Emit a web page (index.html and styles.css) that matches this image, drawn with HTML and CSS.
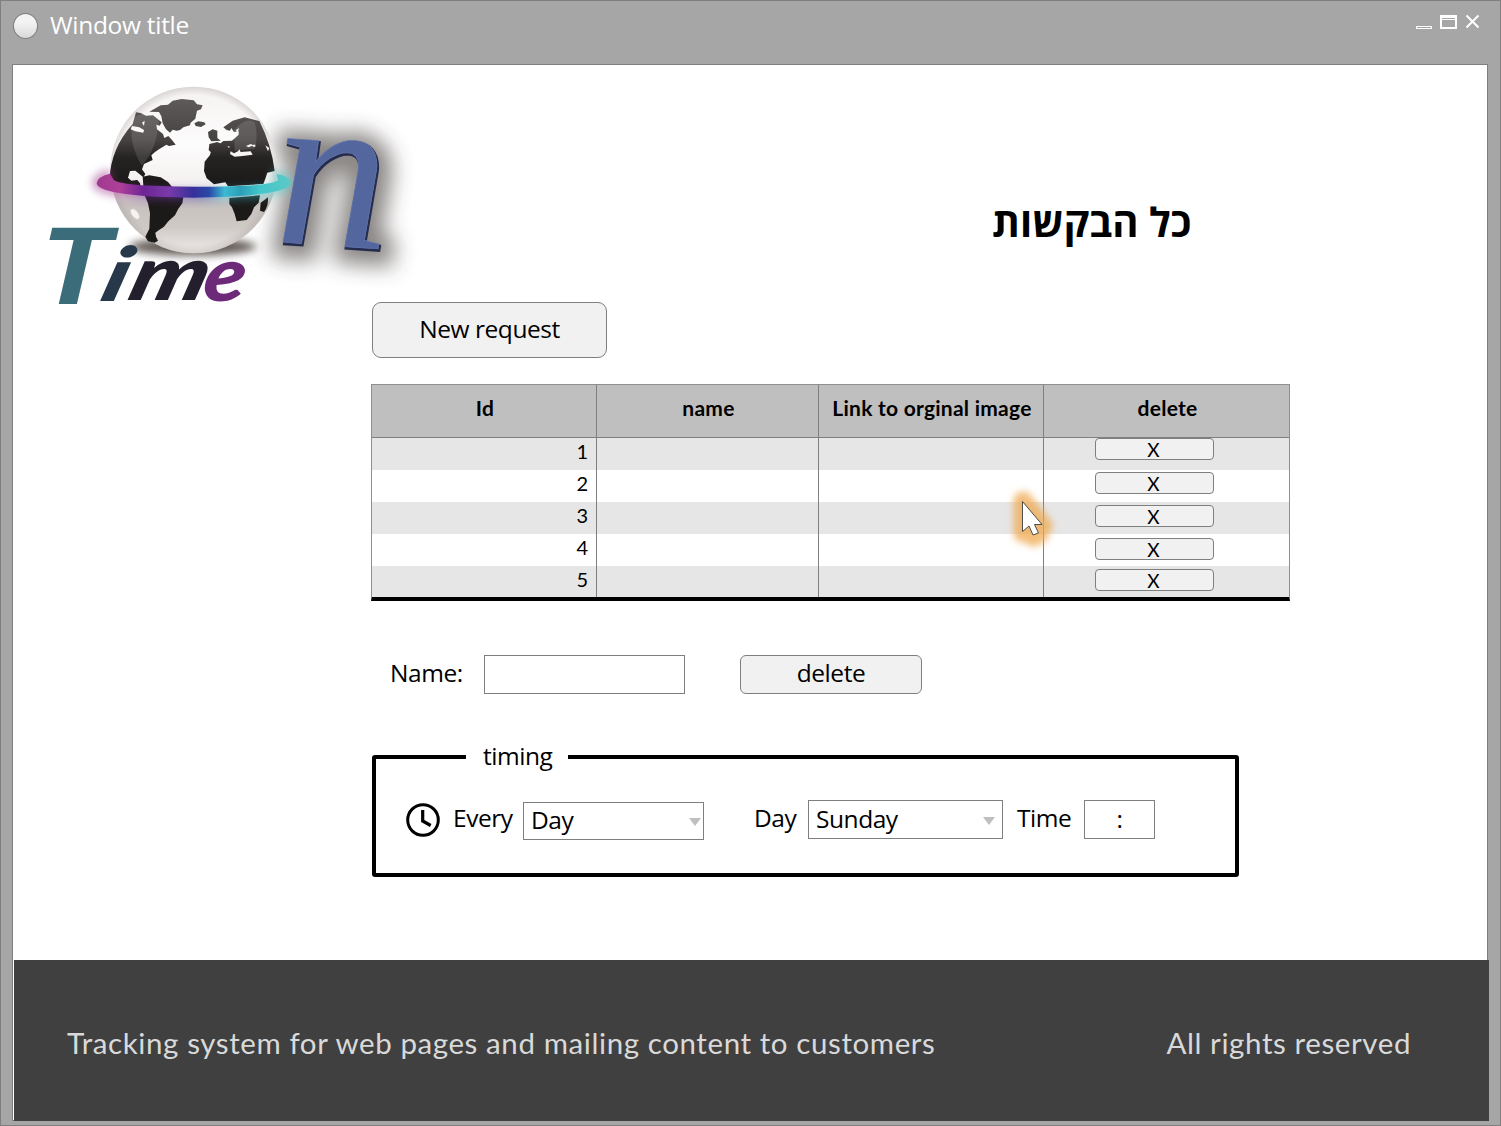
FILE: index.html
```html
<!DOCTYPE html>
<html lang="en">
<head>
<meta charset="utf-8">
<title>Window title</title>
<link rel="stylesheet" href="styles.css">
</head>
<body>
<div class="window">
  <header class="titlebar">
    <span class="orb"></span>
    <span class="window-title">Window title</span>
    <svg class="controls" width="66" height="18" viewBox="0 0 66 18">
      <rect x="1.500" y="12.500" width="15" height="2" fill="#a6a6a6" stroke="#fff"/>
      <path fill="#fff" fill-rule="evenodd" d="M25 1h17v14H25zM27 4v1h13V4zM27 6v7h13V6z"/>
      <path d="M51.500 1.500l12 12M63.500 1.500l-12 12" stroke="#fff" stroke-width="2" fill="none"/>
    </svg>
  </header>
  <main class="panel">
    <div class="banner">
      <svg class="logo" width="390" height="250" viewBox="0 0 1170 750">
        <defs>
          <filter id="soft" x="-50%" y="-60%" width="200%" height="220%"><feGaussianBlur stdDeviation="12"/></filter>
          <filter id="wide" x="-60%" y="-60%" width="220%" height="220%"><feGaussianBlur stdDeviation="32"/></filter>
          <filter id="tiny" x="-50%" y="-50%" width="200%" height="200%"><feGaussianBlur stdDeviation="2"/></filter>
          <linearGradient id="ball" x1="0" y1="0" x2="0" y2="1">
            <stop offset="0" stop-color="#f4f2f1"/><stop offset=".35" stop-color="#fdfcfc"/>
            <stop offset=".6" stop-color="#f2efee"/><stop offset=".7" stop-color="#c6c0be"/>
            <stop offset=".84" stop-color="#cfc9c6"/><stop offset="1" stop-color="#eeebe9"/>
          </linearGradient>
          <radialGradient id="rim"><stop offset=".9" stop-color="#a79f9c" stop-opacity="0"/><stop offset="1" stop-color="#a79f9c" stop-opacity=".35"/></radialGradient>
          <linearGradient id="land" x1="0" y1="80" x2="0" y2="340" gradientUnits="userSpaceOnUse">
            <stop offset="0" stop-color="#5f5c5b"/><stop offset=".5" stop-color="#454241"/><stop offset=".7" stop-color="#262423"/><stop offset="1" stop-color="#1c1a19"/>
          </linearGradient>
          <linearGradient id="ring" x1="200" y1="0" x2="782" y2="0" gradientUnits="userSpaceOnUse">
            <stop offset="0" stop-color="#9e3a8e"/><stop offset=".12" stop-color="#b0409a"/><stop offset=".24" stop-color="#6d2495"/>
            <stop offset=".37" stop-color="#7a3aaa"/><stop offset=".5" stop-color="#35309a"/><stop offset=".58" stop-color="#2a4aa8"/>
            <stop offset=".66" stop-color="#3bbbd2"/><stop offset=".74" stop-color="#2b9fb8"/><stop offset=".84" stop-color="#42c6cb"/><stop offset="1" stop-color="#5cc9c6"/>
          </linearGradient>
        </defs>
        <ellipse cx="488" cy="530" rx="190" ry="26" fill="#4d4541" opacity=".9" filter="url(#soft)"/>
        <g transform="translate(735 515) skewY(4)">
          <text class="logo-n" x="8" y="12" fill="#3b3633" stroke="#3b3633" stroke-width="76" opacity=".6" filter="url(#wide)">n</text>
        </g>
        <circle cx="491" cy="300" r="250" fill="url(#ball)"/>
        <circle cx="491" cy="300" r="250" fill="url(#rim)"/>
        <g fill="url(#land)">
          <path d="M358 125l34-19 22-2 14-12 27-5 36 4 10 12 17 3-5 12-12 4-5 24-14 12-2 8-20 6-10 8-10 2-12-3-8 9-12-10-10-18-4-21-7-13z"/>
          <path d="M493 160l12-6 18 3 4 6-14 8-16-3z"/>
          <path fill-rule="evenodd" d="M318 127l14 2 16 8 21-1 26 21-6 10-10-3 2 14 18 14 4 12 12-6 11 12 11 14-20 4-8-4-22 14-12 8-11 10 4 14-26 12-6 16 10 14-6 10-12-10-12-10-16 1-6 20 10 9 18-2 8 10 2 12 24 2 18 12-28 1-22-6-20 8-30-16-28-18-7-6q2-92 69-167zM302 178l14 6 24 4 2-8-14-8-22-4zM336 158l6 10 2-16z"/>
          <path d="M338 320l20-4 34 6 22 14 12 14 28 22 6 10-3 18-12 16-10 20-20 18-13 16-15 10-11 8 2 12 6 12-10 6-20-4-8-14 12-24 2-46-6-30-12-28z"/>
          <path d="M580 172l28-20 36-10 44 11q36 70 46 150l-22 5-6 18-6 16-106 7-8-12-34 6-22-18-8-22 2-28 16-20 4-14 24-6 0-12 12-10 26-1 20-18 0-10-14 2-8-12-4 8-10-2z"/>
          <path d="M534 186l14-8 14 4 0 22 10 8-28 2-8-12z"/>
          <path d="M538 222l24-6 18 8-2 12-16 10-18 2-8-8z"/>
          <path d="M598 384l92-8-4 22-14 14-8 20-14 18-30 4-6-22-8-20-8-10z"/>
          <path d="M692 398l22-16q2 26-12 44l-12-4z"/>
        </g>
        <path d="M602 244l10 6 12-6 4-6 4 8 30-2 6 10-30 4-24 2-14-8zM648 228l14-6 8 4-14 6zM618 180l10-6-6 16zM668 224l8 0 0 6-8 0zM706 226l8 18 4-10zM592 230l6-2 0 6z" fill="#f6f3f2"/>
        <path d="M305 150q30-35 82-8-4 96-52 145-38-60-30-137zM612 180q36-40 62-24 12 42 0 80l-60 6z" fill="#fff" opacity=".12"/>
        <ellipse cx="315" cy="432" rx="9" ry="18" transform="rotate(-38 315 432)" fill="#fff" opacity=".8" filter="url(#tiny)"/>
        <path d="M244 312q-42 10-42 28c0 24 130 34 288 34s286-10 286-34q-2-18-48-26" fill="none" stroke="url(#ring)" stroke-width="30" opacity=".55" filter="url(#soft)"/>
        <path d="M240 311q-40 10-40 29c0 28 132 43 290 43s292-16 292-43q0-20-42-28l4 18q-14 20-248 20t-246-22z" fill="url(#ring)"/>
        <g transform="translate(735 515) skewY(4)">
          <text class="logo-n" x="3" y="5" fill="#252c4d" stroke="#252c4d" stroke-width="7">n</text>
          <text class="logo-n" x="0" y="0" fill="#53669d" stroke="#6779b0" stroke-width="2">n</text>
        </g>
        <text class="logo-word logo-cap" transform="translate(22 703) skewX(-5)" textLength="212" lengthAdjust="spacingAndGlyphs" fill="#3b6c79">T</text>
        <g class="logo-word">
          <text transform="translate(204 692) skewX(-16)" textLength="76" lengthAdjust="spacingAndGlyphs" fill="#27384a">i</text>
          <text transform="translate(288 690) skewX(-16)" textLength="232" lengthAdjust="spacingAndGlyphs" fill="#231f2d">m</text>
          <text transform="translate(514 692) skewX(-8)" textLength="126" lengthAdjust="spacingAndGlyphs" fill="#6c2a79">e</text>
        </g>
      </svg>
      <h1 class="heading" dir="rtl" lang="he">כל הבקשות</h1>
    </div>
    <section class="content">
      <button class="btn btn-new">New request</button>
      <div class="table">
        <div class="row head"><span>Id</span><span>name</span><span>Link to orginal image</span><span>delete</span></div>
        <div class="row"><span class="id">1</span><span></span><span></span><span><button class="btn btn-x">X</button></span></div>
        <div class="row"><span class="id">2</span><span></span><span></span><span><button class="btn btn-x">X</button></span></div>
        <div class="row"><span class="id">3</span><span></span><span></span><span><button class="btn btn-x">X</button></span></div>
        <div class="row"><span class="id">4</span><span></span><span></span><span><button class="btn btn-x">X</button></span></div>
        <div class="row"><span class="id">5</span><span></span><span></span><span><button class="btn btn-x">X</button></span></div>
      </div>
      <div class="name-row">
        <label class="name-label">Name:</label>
        <span class="field name-field"></span>
        <button class="btn btn-delete">delete</button>
      </div>
      <fieldset class="timing">
        <legend>timing</legend>
        <div class="timing-row">
          <svg class="clock" width="34" height="34" viewBox="0 0 34 34" fill="none" stroke="#000"><circle cx="17" cy="17" r="15.300" stroke-width="3"/><path d="M16.700 7v11l8 4.500" stroke-width="3.200"/></svg>
          <span class="lbl every">Every</span>
          <span class="field select sel-day">Day<i class="arrow"></i></span>
          <span class="lbl day">Day</span>
          <span class="field select sel-sunday">Sunday<i class="arrow"></i></span>
          <span class="lbl time">Time</span>
          <span class="field clock-field">:</span>
        </div>
      </fieldset>
    </section>
    <footer class="footer"><span>Tracking system for web pages and mailing content to customers</span><span>All rights reserved</span></footer>
    <svg class="cursor" width="60" height="70" viewBox="0 0 60 70">
      <defs><filter id="glow" x="-100%" y="-100%" width="300%" height="300%"><feGaussianBlur stdDeviation="3.500"/></filter></defs>
      <path d="M23 15v32l6-5 4 9 6-3-1-8h5z" fill="#efa94f" stroke="#efa94f" stroke-width="19" stroke-linejoin="round" opacity=".75" filter="url(#glow)"/>
      <path d="M22.500 15.500v30l6.500-5.500 4 9 5.500-2-4-8.500h7.500z" fill="#fff" stroke="#4d4d4d"/>
    </svg>
  </main>
</div>
</body>
</html>
```
FILE: styles.css
```css
* { box-sizing: border-box; }
body {
  margin: 0;
  font: 24.5px/32px "Open Sans", "Noto Sans", sans-serif;
  letter-spacing: -0.45px;
  color: #000;
}
.window {
  width: 1501px;
  height: 1126px;
  background: #a6a6a6;
  border: 1px solid #7f7f7f;
  padding: 0 12px 4px 11px;
  display: flex;
  flex-direction: column;
}
.titlebar {
  height: 63px;
  display: flex;
  align-items: flex-start;
  color: #fff;
}
.orb {
  width: 25px;
  height: 26px;
  margin: 12px 12px 0 1px;
  border: 1px solid #7f7f7f;
  border-radius: 50%;
  background: linear-gradient(#f3f3f3 35%, #d9d9d9);
}
.window-title { margin-top: 8px; letter-spacing: -0.3px; }
.controls { margin: 13px 7px 0 auto; }
.panel {
  flex: 1;
  position: relative;
  background: #fff;
  border: 1px solid #7f7f7f;
  display: flex;
  flex-direction: column;
}
.banner {
  height: 237px;
  padding-left: 17px;
  display: flex;
  align-items: flex-start;
}
.logo { margin-top: 5px; flex: none; overflow: visible; letter-spacing: 0; }
.logo-n { font: italic 680px "Liberation Serif", serif; }
.logo-word { font: italic 900 225px Lato, sans-serif; }
.logo-cap { font-size: 315px; }
.heading {
  margin: 133px 0 0 572px;
  font: bold 40px/48px "Open Sans", "Noto Sans", sans-serif;
  letter-spacing: 0;
  white-space: nowrap;
}
.content { padding-left: 358px; flex: 1; }
.btn {
  display: block;
  padding: 0;
  background: #f1f1f1;
  border: 1px solid #7f7f7f;
  color: #000;
  font: inherit;
  letter-spacing: inherit;
  text-align: center;
}
.btn-new { width: 235px; height: 56px; margin-left: 1px; padding-bottom: 2px; border-radius: 9px; }
.table {
  width: 919px;
  height: 217px;
  margin-top: 26px;
  border: 1px solid #8f8f8f;
  border-bottom: 4px solid #000;
  font: 20px/26px Lato, "Open Sans", sans-serif;
  letter-spacing: 0;
}
.row {
  display: grid;
  grid-template-columns: 225px 222px 225px 1fr;
  height: 32px;
}
.row > span { border-right: 1px solid #7f7f7f; }
.row > span:last-child { border-right: 0; }
.row:nth-child(even) { background: #e6e6e6; }
.row:last-child { height: 31px; }
.head {
  height: 53px;
  background: #bfbfbf;
  border-bottom: 1px solid #7f7f7f;
  text-align: center;
  font-size: 21px;
  font-weight: bold;
  letter-spacing: 0.25px;
  line-height: 46px;
}
.head > span { padding-left: 2px; }
.id { text-align: right; padding-right: 8px; }
.btn-x {
  width: 119px;
  height: 22px;
  margin: 0 0 0 51px;
  padding-right: 2px;
  border-radius: 4px;
  font-size: 19px;
  line-height: 22px;
}
.row:nth-child(3) .btn-x { margin-top: 2px; }
.row:nth-child(4) .btn-x, .row:nth-child(6) .btn-x { margin-top: 3px; }
.row:nth-child(5) .btn-x { margin-top: 4px; }
.name-row {
  margin-top: 54px;
  display: flex;
  height: 39px;
}
.name-label { width: 94px; margin-left: 19px; padding-top: 2px; }
.field { border: 1px solid #7f7f7f; background: #fff; display: block; }
.name-field { width: 201px; }
.btn-delete { width: 182px; margin-left: 55px; padding-bottom: 3px; border-radius: 6px; }
.timing {
  width: 867px;
  height: 135px;
  margin: 48px 0 0 1px;
  padding: 0;
  border: 4px solid #000;
  border-radius: 3px;
}
.timing legend { margin-left: 90px; width: 102px; height: 30px; padding: 0 0 0 17px; line-height: 28px; }
.timing-row { display: flex; margin-top: 28px; align-items: flex-start; }
.clock { margin: 3px 0 0 30px; flex: none; }
.lbl { padding-top: 2px; }
.every { margin-left: 13px; width: 70px; }
.select { display: flex; align-items: center; justify-content: space-between; padding: 0 2px 2px 7px; }
.arrow { border: 6.5px solid transparent; border-top: 8px solid #bfbfbf; border-bottom: 0; margin-top: 4px; }
.sel-day { width: 181px; height: 38px; margin-top: 2px; }
.day { margin-left: 50px; width: 54px; }
.sel-sunday { width: 195px; height: 39px; padding: 0 7px 1px; }
.time { margin-left: 14px; width: 67px; }
.clock-field { width: 71px; height: 39px; text-align: center; line-height: 36px; }
.footer {
  height: 161px;
  margin: 0 -2px -1px 1px;
  padding: 4px 78px 0 53px;
  background: #404040;
  color: #d9d9d9;
  display: flex;
  justify-content: space-between;
  align-items: center;
  font: 29.5px/40px Lato, "Open Sans", sans-serif;
  letter-spacing: 0.59px;
}
.cursor { position: absolute; left: 987px; top: 421px; overflow: visible; }
```
